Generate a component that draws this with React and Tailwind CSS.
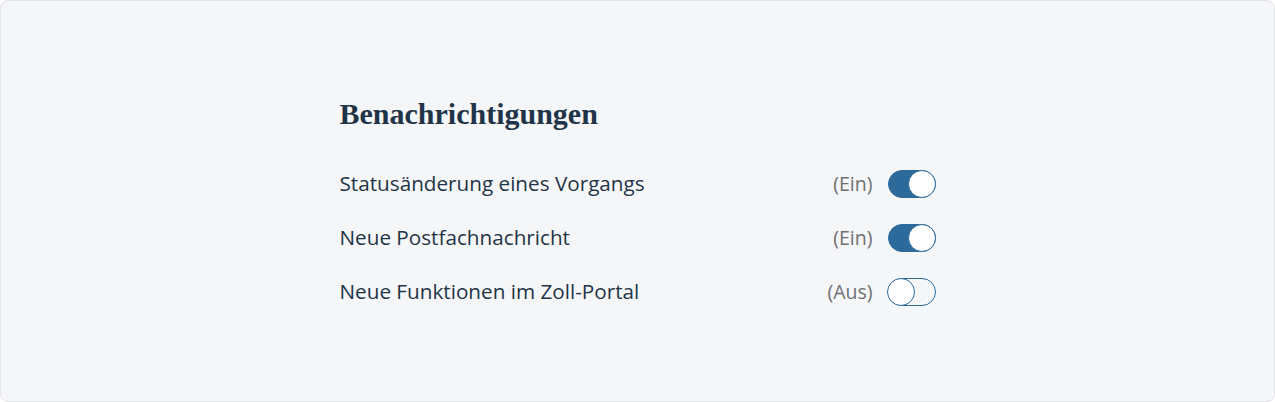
import React from "react";

function Toggle({ on }) {
  return (
    <div
      className={
        "relative w-[48px] h-[28px] rounded-full border-[1.5px] border-[#2c6a9b] " +
        (on ? "bg-[#2c6a9b]" : "bg-transparent")
      }
    >
      <div
        className={
          "absolute top-[-1.5px] w-[28px] h-[28px] rounded-full bg-white border-[1.5px] border-[#2c6a9b] " +
          (on ? "right-[-1.5px]" : "left-[-1.5px]")
        }
      />
    </div>
  );
}

const rows = [
  { label: "Statusänderung eines Vorgangs", on: true },
  { label: "Neue Postfachnachricht", on: true },
  { label: "Neue Funktionen im Zoll-Portal", on: false },
];

export default function App() {
  return (
    <div className="w-[1275px] h-[402px] bg-white">
      <div className="w-full h-full bg-[#f5f6f8] border border-[#e2e4e8] rounded-[8px] flex justify-center">
        <div className="w-[596px] pt-[95px]">
          <h2
            className="text-[30px] font-bold text-[#1f3447] leading-[36px] m-0"
            style={{ fontFamily: '"Liberation Serif", "DejaVu Serif", serif' }}
          >
            Benachrichtigungen
          </h2>
          <div
            className="mt-[38px] flex flex-col gap-[26px]"
            style={{ fontFamily: '"Open Sans", "Liberation Sans", sans-serif' }}
          >
            {rows.map((r) => (
              <div key={r.label} className="flex items-center justify-between h-[28px]">
                <span className="text-[20.7px] text-[#1f3447]">{r.label}</span>
                <div className="flex items-center gap-[15px]">
                  <span className="text-[19.5px] text-[#6e7073]">{r.on ? "(Ein)" : "(Aus)"}</span>
                  <Toggle on={r.on} />
                </div>
              </div>
            ))}
          </div>
        </div>
      </div>
    </div>
  );
}
